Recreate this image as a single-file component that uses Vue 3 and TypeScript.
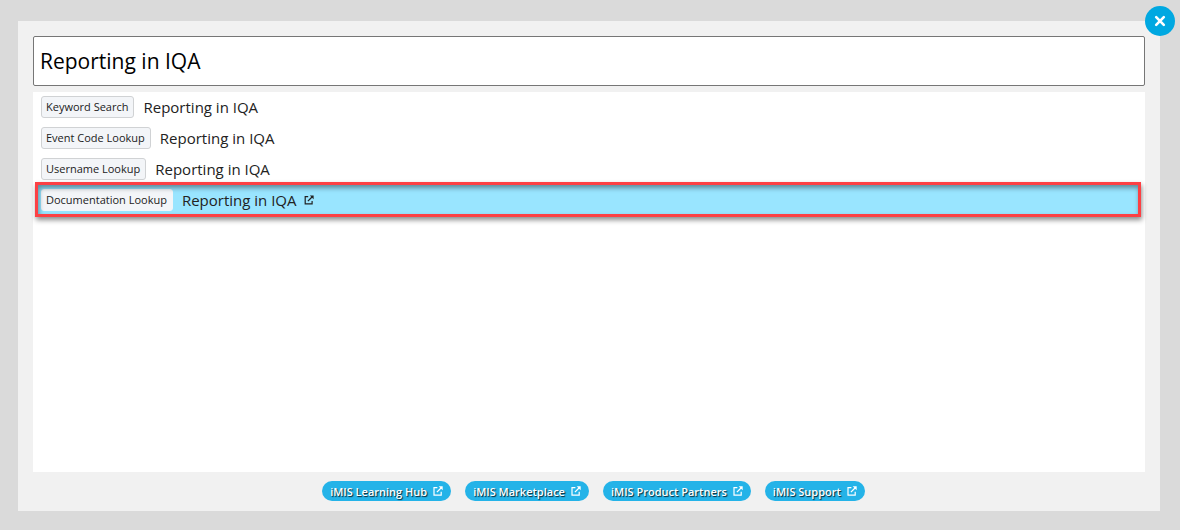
<script setup lang="ts">
import { ref } from 'vue'

interface Result {
  tag: string
  external: boolean
}

const query = ref('Reporting in IQA')
const selected = ref(3)

const results: Result[] = [
  { tag: 'Keyword Search', external: false },
  { tag: 'Event Code Lookup', external: false },
  { tag: 'Username Lookup', external: false },
  { tag: 'Documentation Lookup', external: true },
]

const links: string[] = [
  'iMIS Learning Hub',
  'iMIS Marketplace',
  'iMIS Product Partners',
  'iMIS Support',
]
</script>

<template>
  <div class="backdrop">
    <main class="dialog" role="dialog" aria-label="Quick search">
      <button class="close" type="button" aria-label="Close">
        <svg viewBox="0 0 12 12" width="12" height="12" aria-hidden="true">
          <path d="M2.2 2.2 9.8 9.8M9.8 2.2 2.2 9.8" fill="none" stroke="#fff" stroke-width="2.6" stroke-linecap="round" />
        </svg>
      </button>

      <input v-model="query" class="search" type="text" aria-label="Search" />

      <ul class="results">
        <li v-for="(r, i) in results" :key="r.tag" class="row" :class="{ selected: i === selected }">
          <a class="result" href="#">
            <span class="tag">{{ r.tag }}</span>
            <span class="term">{{ query }}</span>
            <svg v-if="r.external" class="external" viewBox="0 0 10 10" width="10" height="10" aria-hidden="true">
              <path d="M4.2 1.7H1.2V8.9H8.1V6" fill="none" stroke="currentColor" stroke-width="1.2" />
              <path d="M3.9 6.1 8.5 1.5" fill="none" stroke="currentColor" stroke-width="1.3" />
              <path d="M5.8 0.4H9.6V4.2Z" fill="currentColor" />
            </svg>
          </a>
        </li>
      </ul>

      <nav class="links" aria-label="Resources">
        <a v-for="l in links" :key="l" class="pill" href="#">
          <span class="label">{{ l }}</span>
          <svg viewBox="0 0 10 10" width="10" height="10" aria-hidden="true">
            <path d="M4.4 1.6H1V9.1H8.2V5.8" fill="none" stroke="currentColor" stroke-width="1.2" />
            <path d="M3.9 6.1 8.5 1.5" fill="none" stroke="currentColor" stroke-width="1.3" />
            <path d="M5.7 0.3H9.7V4.3Z" fill="currentColor" />
          </svg>
        </a>
      </nav>
    </main>
  </div>
</template>

<style>
body {
  margin: 0;
  background: #dadada;
}
</style>

<style scoped>
.backdrop {
  box-sizing: border-box;
  display: flex;
  min-height: 100vh;
  padding: 21px 20px 19px 18px;
  background: #dadada;
  font-family: "Open Sans", "Noto Sans", sans-serif;
}

.dialog {
  position: relative;
  box-sizing: border-box;
  flex: 1;
  display: flex;
  flex-direction: column;
  min-width: 0;
  padding: 15px 15px 10px;
  background: #f1f1f1;
}

.close {
  position: absolute;
  top: -15px;
  right: -15px;
  display: flex;
  align-items: center;
  justify-content: center;
  width: 30px;
  height: 30px;
  padding: 0;
  border: 0;
  border-radius: 50%;
  background: #00a8e1;
  cursor: pointer;
}

.search {
  box-sizing: border-box;
  width: 100%;
  height: 50px;
  margin: 0 0 6px;
  padding: 0 6px;
  border: 1px solid #767676;
  border-radius: 2px;
  background: #fff;
  color: #000;
  font-family: inherit;
  font-size: 21px;
  outline: 0;
}

.results {
  flex: 1;
  display: flex;
  flex-direction: column;
  gap: 1px;
  margin: 0;
  padding: 0 4px 0 2px;
  background: #fff;
  list-style: none;
}

.row {
  position: relative;
}

.result {
  box-sizing: border-box;
  display: flex;
  align-items: center;
  height: 30px;
  padding: 0 6px;
  color: #222;
  text-decoration: none;
}

.tag {
  box-sizing: border-box;
  height: 22px;
  margin-right: 9px;
  padding: 0 5px 0 4px;
  border: 1px solid #d0d2d4;
  border-radius: 3px;
  background: #f3f5f8;
  font-size: 11px;
  line-height: 20px;
  white-space: nowrap;
}

.term {
  font-size: 15px;
  line-height: 20px;
  white-space: nowrap;
}

.external {
  margin-left: 7px;
}

.selected .result {
  background: #99e5ff;
}

.selected .tag {
  border-color: #f3f5f8;
}

.selected::after {
  content: "";
  position: absolute;
  inset: -3px 0 -2px;
  border: 3px solid #fc4044;
  box-shadow: 1px 3px 5px rgba(0, 0, 0, 0.45), inset 1px 3px 5px rgba(0, 0, 0, 0.4);
  pointer-events: none;
}

.links {
  display: flex;
  justify-content: center;
  gap: 14px;
  padding: 9px 0 0 9px;
}

.pill {
  display: flex;
  align-items: center;
  gap: 6px;
  height: 20px;
  padding: 0 8px;
  border-radius: 10px;
  background: #24b3e8;
  color: #fff;
  font-size: 11px;
  font-weight: 600;
  line-height: 20px;
  text-decoration: none;
  text-shadow: 1px 1px 1px rgba(0, 0, 0, 0.8);
  white-space: nowrap;
}

.label {
  padding-top: 2px;
}
</style>
